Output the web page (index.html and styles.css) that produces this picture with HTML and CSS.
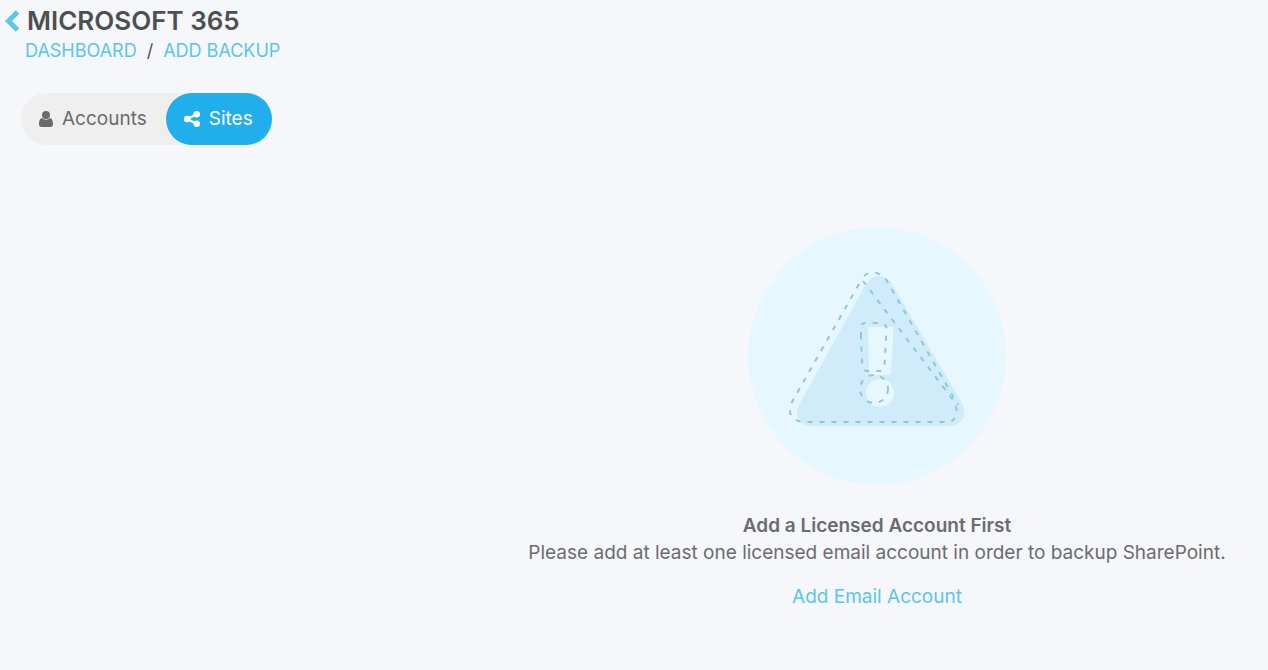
FILE: index.html
```html
<!DOCTYPE html>
<html lang="en">
  <head>
    <meta charset="UTF-8" />
    <meta name="viewport" content="width=device-width, initial-scale=1.0" />
    <title>Microsoft 365 - Add Backup</title>
    <link rel="stylesheet" href="styles.css">
  </head>
  <body>
    <header class="page-header">
      <div class="title-row">
        <a class="back-link" href="#" aria-label="Back">
          <svg width="15" height="22" viewBox="0 0 15 22" aria-hidden="true">
            <path d="M12.500 2 L3.500 11 L12.500 20" fill="none" stroke="currentColor" stroke-width="5" />
          </svg>
        </a>
        <h1>MICROSOFT 365</h1>
      </div>
      <nav class="breadcrumb" aria-label="Breadcrumb">
        <a href="#">DASHBOARD</a>
        <span class="separator">/</span>
        <a href="#">ADD BACKUP</a>
      </nav>
    </header>

    <!-- Accounts / Sites switch -->
    <div class="tabs">
      <button class="tab" type="button">
        <svg width="14" height="16" viewBox="0 0 14 16" aria-hidden="true">
          <circle cx="7" cy="4" r="4" fill="currentColor" />
          <path d="M3 7 Q7 10.500 11 7 C13.200 7.500 14 10.500 14 13 Q14 16 11.500 16 H2.500 Q0 16 0 13 C0 10.500 0.800 7.500 3 7 Z" fill="currentColor" />
        </svg>
        Accounts
      </button>
      <button class="tab active" type="button">
        <svg width="16" height="16" viewBox="0 0 16 16" aria-hidden="true">
          <path d="M13 3 L3.300 8 L13 13" fill="none" stroke="currentColor" stroke-width="2.400" />
          <circle cx="3.300" cy="8" r="3.300" fill="currentColor" />
          <circle cx="12.700" cy="3.300" r="3.300" fill="currentColor" />
          <circle cx="12.700" cy="12.700" r="3.300" fill="currentColor" />
        </svg>
        Sites
      </button>
    </div>

    <!-- Empty state -->
    <main class="empty-state">
      <svg class="warning" width="258" height="258" viewBox="748 227 258 258" aria-hidden="true">
        <circle class="disc" cx="877" cy="356" r="129" />
        <path class="sign" d="M866 284 Q871 276 879 276 Q887 276 892 284 L962 403 Q967 413 962 420 Q958 426 949 426 H811 Q801 426 798 419 Q795 413 800 403 Z" />
        <path class="cutout" d="M868 327 H893.500 L891 371 Q890.500 375 888 375 H872 Q869 375 869 371 Z" />
        <circle class="cutout" cx="880" cy="393" r="14" />
        <g class="dashes">
          <path d="M859 284 L792 402 Q788 412 792 417 Q797 422 804 422 H947 Q954 422 956 415 Q958 408 953 400 L863 281" />
          <path d="M864 276 Q868 272.500 873 272.500 Q882 273 887 281 L958 405" />
          <path d="M861 337 V328 Q860 323 866 323 H882 Q887 324 886.500 331 L884.500 365 Q884 371 879 371 H869 Q863 372 862 365 Z" />
          <circle cx="874" cy="389" r="14" />
        </g>
      </svg>
      <h2>Add a Licensed Account First</h2>
      <p>Please add at least one licensed email account in order to backup SharePoint.</p>
      <a class="add-link" href="#">Add Email Account</a>
    </main>
  </body>
</html>
```

FILE: styles.css
```css
/* General Styles */
body {
  font-family: Inter, "Open Sans", sans-serif;
  background-color: #f5f7fb;
  color: #6b6c70;
  margin: 0;
  font-size: 19px;
  line-height: 26px;
}

a {
  color: #5bc5ef;
  text-decoration: none;
}

a:hover {
  text-decoration: underline;
}

/* Header */
.page-header {
  padding: 5px 5px 0;
}

.title-row {
  display: flex;
  align-items: center;
  gap: 7px;
}

.back-link svg {
  display: block;
}

h1 {
  margin: 0;
  color: #4e4f53;
  font-size: 26px;
  font-weight: 600;
  line-height: 32px;
}

.breadcrumb {
  display: flex;
  gap: 10px;
  padding-left: 20px;
  font-size: 18px;
  line-height: 28px;
}

.separator {
  color: #4e4f53;
}

/* Tabs */
.tabs {
  display: inline-flex;
  margin: 28px 0 0 21px;
  border-radius: 26px;
  background-color: #efefef;
}

.tab {
  display: flex;
  align-items: center;
  gap: 9px;
  padding: 13px 19px 13px 18px;
  border: none;
  border-radius: 26px;
  background: none;
  color: #6b6b6b;
  font: inherit;
  cursor: pointer;
}

.tab.active {
  background-color: #21aeed;
  color: white;
}

/* Empty state */
.empty-state {
  display: flex;
  flex-direction: column;
  align-items: center;
  margin-top: 82px;
  padding-left: 486px;
  text-align: center;
}

.warning {
  display: block;
  margin-bottom: 27px;
}

.disc,
.cutout {
  fill: #e7f7ff;
}

.sign {
  fill: #d0ecfa;
}

.dashes {
  fill: none;
  stroke: #92c5da;
  stroke-width: 2;
  stroke-dasharray: 5 7;
}

h2,
p {
  margin: 0;
  font-size: 19px;
  line-height: 27px;
}

h2 {
  font-weight: 600;
}

.add-link {
  margin-top: 18px;
}
```
